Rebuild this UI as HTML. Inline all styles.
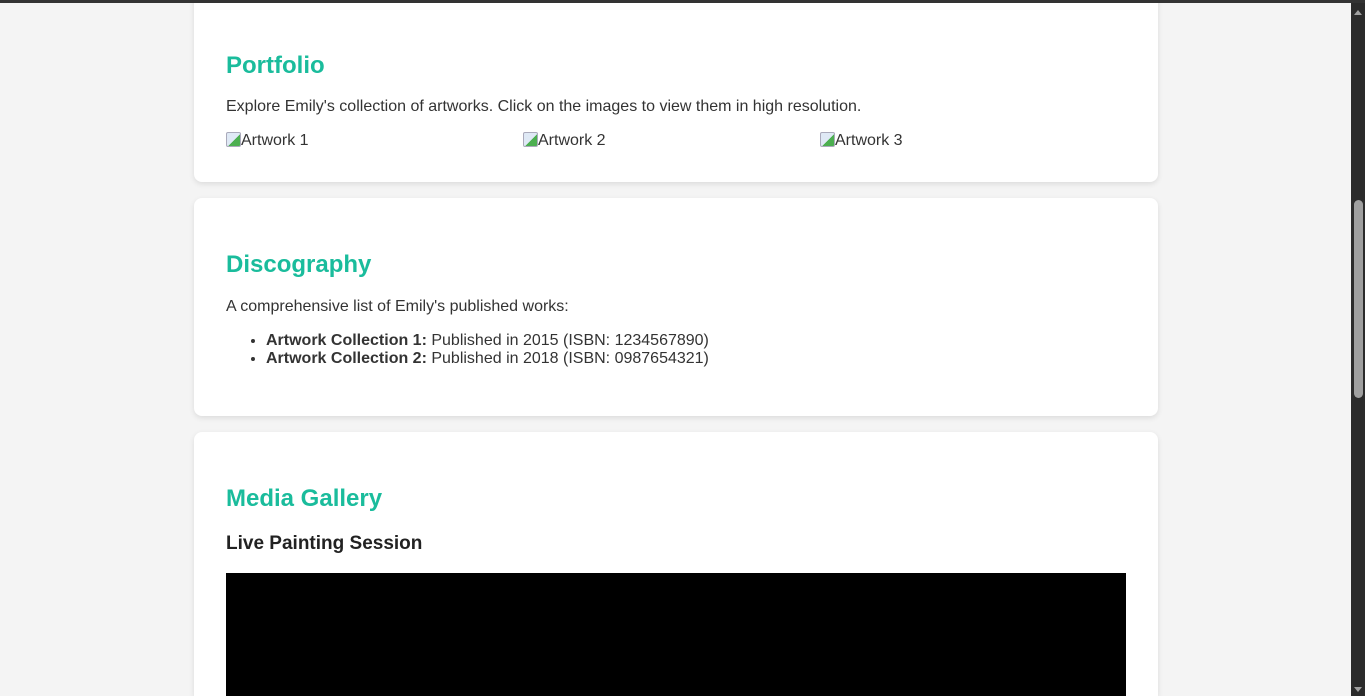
<!DOCTYPE html>
<html><head><style>
html,body{margin:0;padding:0;width:1365px;height:696px;overflow:hidden;background:#f4f4f4;font-family:"Liberation Sans",Arial,sans-serif;color:#333;}
.top{position:absolute;left:0;top:0;width:1365px;height:3px;background:#333;z-index:5}
.card{position:absolute;left:194px;width:964px;background:#fff;border-radius:8px;box-shadow:0 2px 6px rgba(0,0,0,0.1);}
h2{position:absolute;left:32px;margin:0;font-size:24px;font-weight:bold;color:#1abc9c;}
p,.t{position:absolute;left:32px;margin:0;font-size:16px;}
.img{position:absolute;font-size:16px;}
.ic{display:inline-block;width:15px;height:15px;vertical-align:-2px;background:linear-gradient(135deg,#dfe9f5 55%,#4caf50 55%);border:1px solid #aab;box-sizing:border-box;border-radius:2px;margin-right:0}
ul{position:absolute;left:32px;top:134px;margin:0;padding-left:40px;font-size:16px;line-height:18px;}
.sb{position:absolute;left:1351px;top:3px;width:14px;height:693px;background:#2b2b2b}
.th{position:absolute;left:3px;top:197px;width:9px;height:198px;background:#9f9f9f;border-radius:5px}
</style></head><body>
<div class="top"></div>
<div class="card" style="top:-20px;height:202px">
<h2 style="top:72px">Portfolio</h2>
<p style="top:118px">Explore Emily's collection of artworks. Click on the images to view them in high resolution.</p>
<div class="img" style="left:32px;top:152px"><span class="ic"></span>Artwork 1</div>
<div class="img" style="left:329px;top:152px"><span class="ic"></span>Artwork 2</div>
<div class="img" style="left:626px;top:152px"><span class="ic"></span>Artwork 3</div>
</div>
<div class="card" style="top:198px;height:218px">
<h2 style="top:53px">Discography</h2>
<p style="top:100px">A comprehensive list of Emily's published works:</p>
<ul><li><b>Artwork Collection 1:</b> Published in 2015 (ISBN: 1234567890)</li><li><b>Artwork Collection 2:</b> Published in 2018 (ISBN: 0987654321)</li></ul>
</div>
<div class="card" style="top:432px;height:264px;border-radius:8px 8px 0 0">
<h2 style="top:53px">Media Gallery</h2>
<div class="t" style="top:101px;font-size:19px;font-weight:bold;color:#222">Live Painting Session</div>
<div style="position:absolute;left:32px;top:141px;width:900px;height:123px;background:#000"></div>
</div>
<div class="sb"><div class="th"></div>
<div style="position:absolute;left:3px;top:7px;border:4px solid transparent;border-bottom:5px solid #a0a0a0;border-top:0"></div>
<div style="position:absolute;left:3px;top:684px;border:4px solid transparent;border-top:5px solid #a0a0a0;border-bottom:0"></div>
</div>
</body></html>
